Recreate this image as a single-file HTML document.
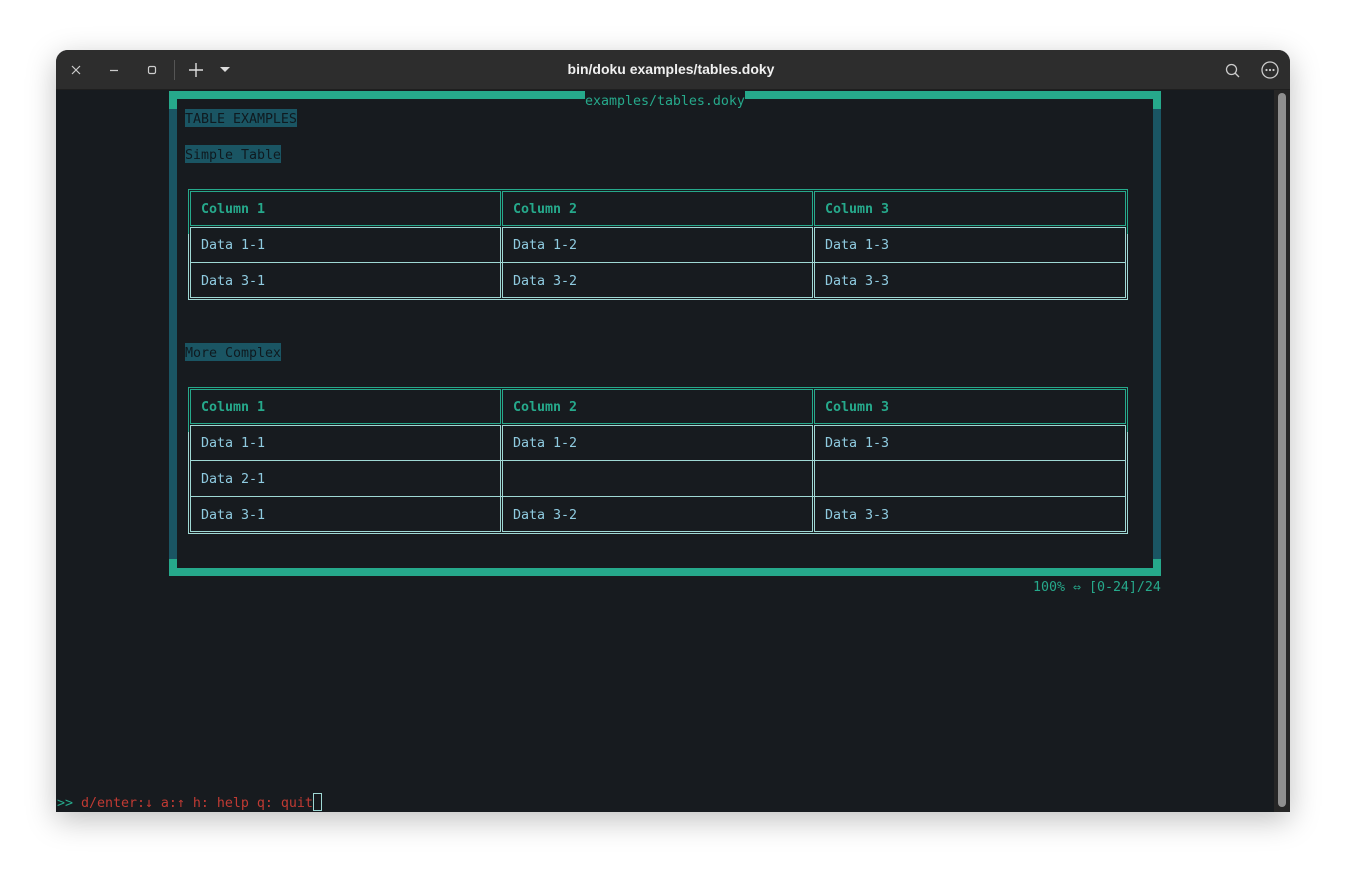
<!DOCTYPE html>
<html><head><style>
*{margin:0;padding:0;box-sizing:border-box}
body{width:1346px;height:874px;background:#fff;position:relative;overflow:hidden;font-family:"DejaVu Sans Mono","Liberation Mono",monospace;font-size:13.33px}
.win{position:absolute;left:56px;top:50px;width:1234px;height:762px;border-radius:12px 12px 0 0;background:#171b1f;overflow:hidden;box-shadow:0 8px 30px rgba(0,0,0,.25)}
.tb{position:absolute;left:0;top:0;width:1234px;height:40px;background:#2d2d2d;border-bottom:1px solid #1f1f1f}
.title{position:absolute;left:-2px;width:100%;top:11px;text-align:center;color:#f0f0f0;font:bold 14px "Liberation Sans",sans-serif}
.a{position:absolute}
.t{position:absolute;white-space:pre;height:18px;line-height:22px;letter-spacing:-0.03px}
.hd{background:#1a5563;color:#0f1a20}
.c{position:absolute;border:1px solid #9fd8d4}
.h{position:absolute;border:1px solid #26a98b}
.ht{color:#26a98b;font-weight:bold}
.dt{color:#8fcbe0}
</style></head><body>
<div class="win">
<div class="tb">
<svg class="a" style="left:14px;top:14px" width="12" height="12"><path d="M2 2L10 10M10 2L2 10" stroke="#ccc" stroke-width="1.2"/></svg>
<svg class="a" style="left:52px;top:14px" width="12" height="12"><path d="M2 6.5H10" stroke="#ccc" stroke-width="1.2"/></svg>
<svg class="a" style="left:90px;top:14px" width="12" height="12"><rect x="2.5" y="2.5" width="7" height="7" rx="1.5" fill="none" stroke="#ccc" stroke-width="1.2"/></svg>
<div class="a" style="left:118px;top:10px;width:1px;height:20px;background:#555"></div>
<svg class="a" style="left:132px;top:12px" width="16" height="16"><path d="M8 1V15M1 8H15" stroke="#ddd" stroke-width="1.4"/></svg>
<svg class="a" style="left:163px;top:16px" width="12" height="8"><path d="M1 1H11L6 6Z" fill="#ddd"/></svg>
<div class="title">bin/doku examples/tables.doky</div>
<svg class="a" style="left:1168px;top:12px" width="18" height="18"><circle cx="7.5" cy="7.5" r="5" fill="none" stroke="#ccc" stroke-width="1.3"/><path d="M11 11L15 15" stroke="#ccc" stroke-width="1.3"/></svg>
<svg class="a" style="left:1204px;top:10px" width="20" height="20"><circle cx="10" cy="10" r="8" fill="none" stroke="#ccc" stroke-width="1.3"/><circle cx="6.5" cy="10" r="1.1" fill="#ccc"/><circle cx="10" cy="10" r="1.1" fill="#ccc"/><circle cx="13.5" cy="10" r="1.1" fill="#ccc"/></svg>
</div>
<div class="a" style="left:1218px;top:40px;width:16px;height:722px;background:#262626"></div>
<div class="a" style="left:1222px;top:43px;width:8px;height:714px;background:#8f8f8f;border-radius:4px"></div>
</div>
<!-- frame -->
<div class="a" style="left:169px;top:91px;width:992px;height:8px;background:#26a98b"></div>
<div class="a" style="left:169px;top:91px;width:8px;height:485px;background:#1a5563"></div>
<div class="a" style="left:1153px;top:91px;width:8px;height:485px;background:#1a5563"></div>
<div class="a" style="left:169px;top:91px;width:8px;height:18px;background:#26a98b"></div>
<div class="a" style="left:1153px;top:91px;width:8px;height:18px;background:#26a98b"></div>
<div class="a" style="left:169px;top:568px;width:992px;height:8px;background:#26a98b"></div>
<div class="a" style="left:169px;top:559px;width:8px;height:17px;background:#26a98b"></div>
<div class="a" style="left:1153px;top:559px;width:8px;height:17px;background:#26a98b"></div>
<div class="t" style="left:585px;top:91px;width:160px;background:#171b1f;color:#26a98b">examples/tables.doky</div>
<div class="t hd" style="left:185px;top:109px;width:112px">TABLE EXAMPLES</div>
<div class="t hd" style="left:185px;top:145px;width:96px">Simple Table</div>
<div class="t hd" style="left:185px;top:343px;width:96px">More Complex</div>

<!-- table 1 -->
<div class="c" style="left:188px;top:189px;width:940px;height:111px"></div>
<div class="a" style="left:188px;top:189px;width:940px;height:1px;background:#26a98b"></div>
<div class="a" style="left:188px;top:189px;width:1px;height:45px;background:#26a98b"></div>
<div class="a" style="left:1127px;top:189px;width:1px;height:45px;background:#26a98b"></div>
<div class="h" style="left:190px;top:191px;width:311px;height:35px"></div>
<div class="h" style="left:502px;top:191px;width:311px;height:35px"></div>
<div class="h" style="left:814px;top:191px;width:312px;height:35px"></div>
<div class="c" style="left:190px;top:227px;width:311px;height:71px"></div>
<div class="c" style="left:502px;top:227px;width:311px;height:71px"></div>
<div class="c" style="left:814px;top:227px;width:312px;height:71px"></div>
<div class="a" style="left:190px;top:262px;width:936px;height:1px;background:#9fd8d4"></div>
<div class="t ht" style="left:201px;top:199px">Column 1</div>
<div class="t ht" style="left:513px;top:199px">Column 2</div>
<div class="t ht" style="left:825px;top:199px">Column 3</div>
<div class="t dt" style="left:201px;top:235px">Data 1-1</div>
<div class="t dt" style="left:513px;top:235px">Data 1-2</div>
<div class="t dt" style="left:825px;top:235px">Data 1-3</div>
<div class="t dt" style="left:201px;top:271px">Data 3-1</div>
<div class="t dt" style="left:513px;top:271px">Data 3-2</div>
<div class="t dt" style="left:825px;top:271px">Data 3-3</div>

<!-- table 2 -->
<div class="c" style="left:188px;top:387px;width:940px;height:147px"></div>
<div class="a" style="left:188px;top:387px;width:940px;height:1px;background:#26a98b"></div>
<div class="a" style="left:188px;top:387px;width:1px;height:45px;background:#26a98b"></div>
<div class="a" style="left:1127px;top:387px;width:1px;height:45px;background:#26a98b"></div>
<div class="h" style="left:190px;top:389px;width:311px;height:35px"></div>
<div class="h" style="left:502px;top:389px;width:311px;height:35px"></div>
<div class="h" style="left:814px;top:389px;width:312px;height:35px"></div>
<div class="c" style="left:190px;top:425px;width:311px;height:107px"></div>
<div class="c" style="left:502px;top:425px;width:311px;height:107px"></div>
<div class="c" style="left:814px;top:425px;width:312px;height:107px"></div>
<div class="a" style="left:190px;top:460px;width:936px;height:1px;background:#9fd8d4"></div>
<div class="a" style="left:190px;top:496px;width:936px;height:1px;background:#9fd8d4"></div>
<div class="t ht" style="left:201px;top:397px">Column 1</div>
<div class="t ht" style="left:513px;top:397px">Column 2</div>
<div class="t ht" style="left:825px;top:397px">Column 3</div>
<div class="t dt" style="left:201px;top:433px">Data 1-1</div>
<div class="t dt" style="left:513px;top:433px">Data 1-2</div>
<div class="t dt" style="left:825px;top:433px">Data 1-3</div>
<div class="t dt" style="left:201px;top:469px">Data 2-1</div>
<div class="t dt" style="left:201px;top:505px">Data 3-1</div>
<div class="t dt" style="left:513px;top:505px">Data 3-2</div>
<div class="t dt" style="left:825px;top:505px">Data 3-3</div>

<div class="t" style="left:1033px;top:577px;color:#26a98b">100% ⇔ [0-24]/24</div>
<div class="t" style="left:57px;top:793px;color:#c03a33"><span style="color:#26a98b">&gt;&gt;</span> d/enter:↓ a:↑ h: help q: quit</div>
<div class="a" style="left:313px;top:793px;width:9px;height:18px;border:1px solid #9fd8d4"></div>
</body></html>
